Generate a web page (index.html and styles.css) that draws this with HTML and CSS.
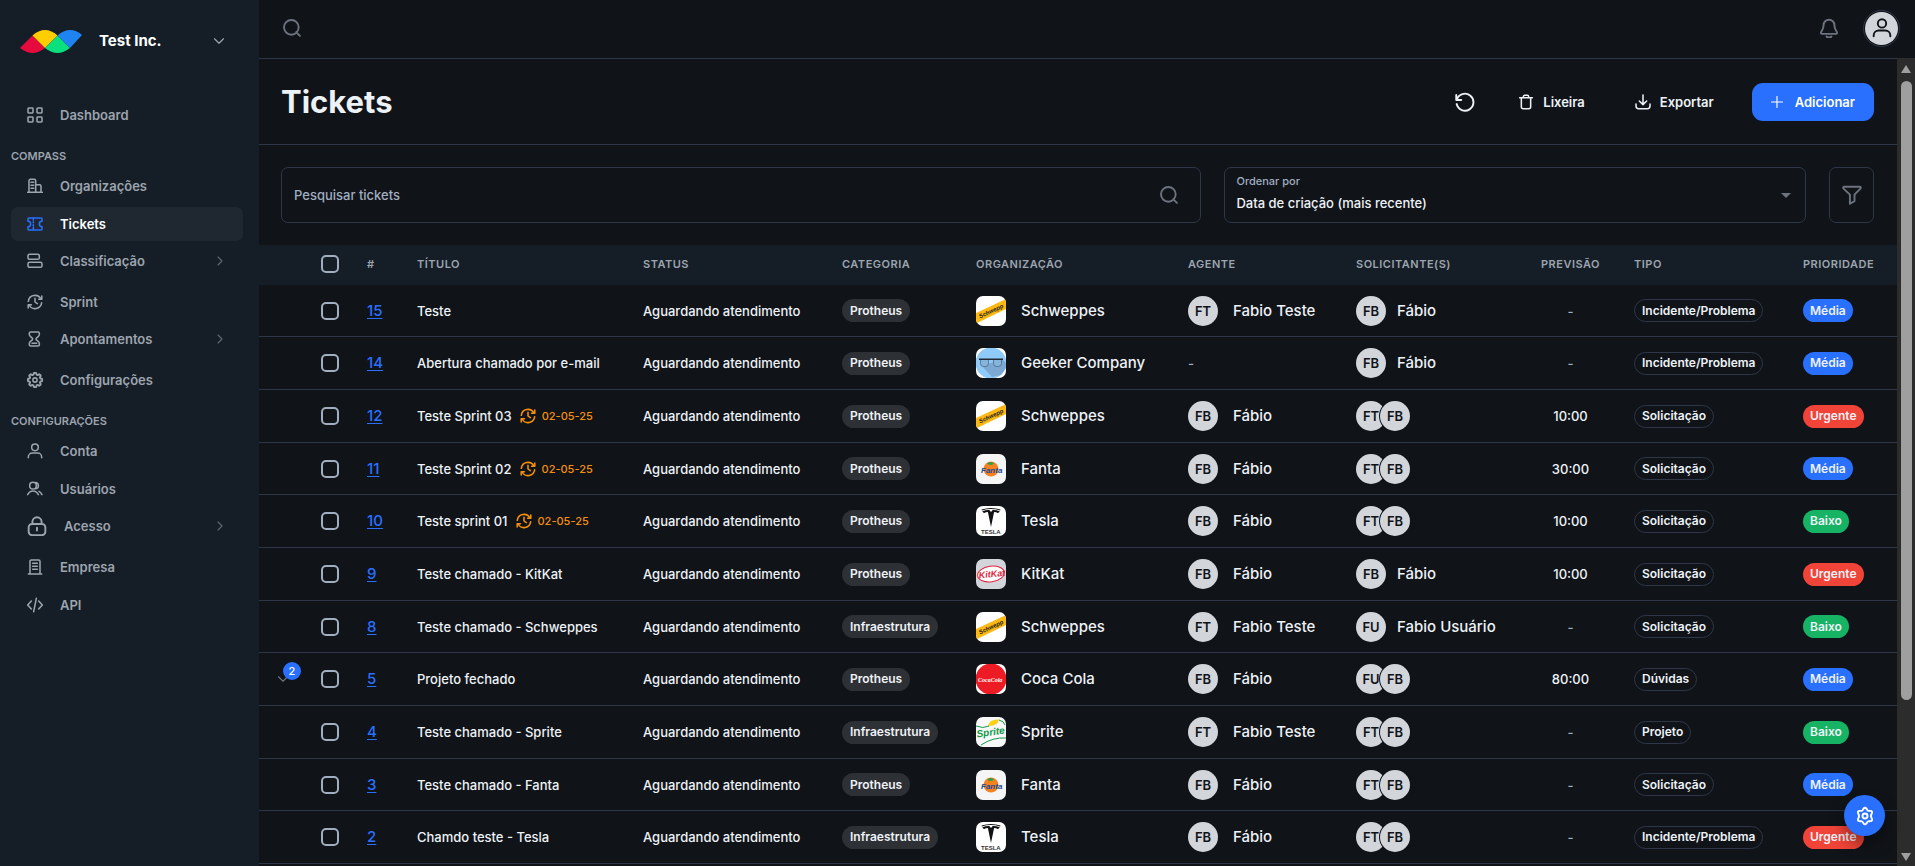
FILE: index.html
```html
<!DOCTYPE html>
<html lang="pt-BR">

<head>
	<meta charset="UTF-8">
	<meta name="viewport" content="width=device-width, initial-scale=1.0">
	<title>Tickets</title>
	<link rel="stylesheet" href="styles.css">
</head>

<body>
	<!-- icons and organization logos -->
	<svg class="sprite" aria-hidden="true">
		<symbol id="i-search" viewBox="0 0 24 24"><path d="M21.5 21.5l-4.5-4.5M20 11.2a8.8 8.8 0 1 1-17.6 0 8.8 8.8 0 0 1 17.6 0z" /></symbol>
		<symbol id="i-down" viewBox="0 0 24 24"><path d="M3 7.500l9 9 9-9" /></symbol>
		<symbol id="i-right" viewBox="0 0 24 24"><path d="M8 4l8 8-8 8" /></symbol>
		<symbol id="i-grid" viewBox="0 0 24 24"><rect x="1.5" y="1.5" width="7.5" height="7.5" rx="1" /><rect x="15" y="1.5" width="7.5" height="7.5" rx="1" /><rect x="1.5" y="15" width="7.5" height="7.5" rx="1" /><rect x="15" y="15" width="7.5" height="7.5" rx="1" /></symbol>
		<symbol id="i-building" viewBox="0 0 24 24"><path d="M1 21.5h22M3 21.5V4a2 2 0 0 1 2-2h6a2 2 0 0 1 2 2v17.500M13 10h6a2 2 0 0 1 2 2v9.500M6 6.500h4M6 11h4M6 15.500h4" /></symbol>
		<symbol id="i-ticket" viewBox="0 0 24 24"><path d="M9.500 4v2M9.500 8.500v1.500M9.500 13v1.500M9.500 17v3M3 3h18a1.500 1.500 0 0 1 1.500 1.500V8a4 4 0 0 0 0 8v3.500A1.500 1.500 0 0 1 21 21H3a1.500 1.500 0 0 1-1.500-1.500V16a4 4 0 0 0 0-8V4.500A1.500 1.500 0 0 1 3 3z" /></symbol>
		<symbol id="i-rows" viewBox="0 0 24 24"><rect x="1.5" y="2" width="17" height="7.5" rx="2.5" /><rect x="1.5" y="14" width="21" height="7.5" rx="2.5" /></symbol>
		<symbol id="i-sprint" viewBox="0 0 24 24"><path d="M20.8 7.500A10 10 0 0 0 2 11M3.200 16.500A10 10 0 0 0 22 13M22.200 3v4.800h-4.800M1.800 21v-4.800h4.800M12 6.500V12l3.500 2.500" /></symbol>
		<symbol id="i-hourglass" viewBox="0 0 24 24"><path d="M5.500 1.500h11a2 2 0 0 1 2 2v2.200c0 2.600-5 4-5 6.300s5 3.700 5 6.300v2.200a2 2 0 0 1-2 2h-11a2 2 0 0 1-2-2v-2.200c0-2.600 5-4 5-6.300s-5-3.700-5-6.300V3.500a2 2 0 0 1 2-2zM7.500 18.500h7" /></symbol>
		<symbol id="i-cog8" viewBox="0 0 24 24"><path transform="translate(-2.4 -2.4) scale(1.2)" d="M10.343 3.940c.09-.542.56-.940 1.110-.940h1.093c.55 0 1.020.398 1.110.940l.149.894c.07.424.384.764.780.930.398.164.855.142 1.205-.108l.737-.527a1.125 1.125 0 0 1 1.450.120l.773.774c.39.389.44 1.002.12 1.450l-.527.737c-.25.35-.272.806-.107 1.204.165.397.505.710.930.780l.893.150c.543.090.940.559.940 1.109v1.094c0 .55-.397 1.020-.940 1.110l-.894.149c-.424.070-.764.383-.929.780-.165.398-.143.854.107 1.204l.527.738c.32.447.269 1.060-.120 1.450l-.774.773a1.125 1.125 0 0 1-1.449.120l-.738-.527c-.35-.25-.806-.272-1.203-.107-.398.165-.710.505-.781.929l-.149.894c-.09.542-.56.940-1.110.940h-1.094c-.55 0-1.019-.398-1.110-.940l-.148-.894c-.071-.424-.384-.764-.781-.930-.398-.164-.854-.142-1.204.108l-.738.527c-.447.320-1.060.269-1.450-.120l-.773-.774a1.125 1.125 0 0 1-.120-1.450l.527-.737c.25-.35.272-.806.108-1.204-.165-.397-.506-.710-.930-.780l-.894-.150c-.542-.09-.940-.56-.940-1.109v-1.094c0-.55.398-1.020.940-1.110l.894-.149c.424-.07.765-.383.930-.780.165-.398.143-.854-.108-1.204l-.526-.738a1.125 1.125 0 0 1 .120-1.450l.773-.773a1.125 1.125 0 0 1 1.450-.120l.737.527c.35.25.807.272 1.204.107.397-.165.710-.505.780-.929l.150-.894z" /><circle cx="12" cy="12" r="3.2" /></symbol>
		<symbol id="i-cog6" viewBox="0 0 24 24"><path d="M10.200 3.200Q12 .8 13.800 3.200L14.600 4.600Q15.300 5.900 16.800 5.800L18.400 5.800Q21.300 6 20.200 8.800L19.500 10.500Q18.800 12 19.500 13.500L20.200 15.200Q21.300 18 18.400 18.200L16.800 18.200Q15.300 18.100 14.600 19.400L13.800 20.800Q12 23.200 10.200 20.800L9.400 19.400Q8.700 18.100 7.200 18.200L5.600 18.200Q2.700 18 3.800 15.200L4.500 13.500Q5.200 12 4.500 10.500L3.800 8.800Q2.700 6 5.600 5.800L7.200 5.800Q8.700 5.900 9.400 4.600z" /><circle cx="12" cy="12" r="3" /></symbol>
		<symbol id="i-user" viewBox="0 0 24 24"><path d="M2 22v-1a6 6 0 0 1 6-6h8a6 6 0 0 1 6 6v1M17 6.500a5 5 0 1 1-10 0 5 5 0 0 1 10 0z" /></symbol>
		<symbol id="i-users" viewBox="0 0 24 24"><path d="M1 20.500c2-3.700 4.500-5.500 8-5.500s6 1.800 8 5.500M14 7a5 5 0 1 1-10 0 5 5 0 0 1 10 0zM13.500 2.200a5 5 0 0 1 0 9.600M18 15.500c2 1 3.500 2.700 4.500 5" /></symbol>
		<symbol id="i-lock" viewBox="0 0 24 24"><path d="M6.500 9V7a5.500 5.500 0 0 1 11 0v2M12 14v3.500M6 9.500h12a4 4 0 0 1 4 4V19a4 4 0 0 1-4 4H6a4 4 0 0 1-4-4v-5.500a4 4 0 0 1 4-4z" /></symbol>
		<symbol id="i-office" viewBox="0 0 24 24"><path d="M2 22.500h20M4.500 22.500V3.500a2 2 0 0 1 2-2h11a2 2 0 0 1 2 2v19M8.500 6.500h7M8.500 11h7M8.500 15.500h7" /></symbol>
		<symbol id="i-code" viewBox="0 0 24 24"><path d="M6.500 6l-5.500 6 5.500 6M17.500 6l5.500 6-5.500 6M14 2l-4 20" /></symbol>
		<symbol id="i-bell" viewBox="0 0 24 24"><path d="M9 22.300c.8.700 1.900 1 3 1s2.200-.3 3-1M18.500 8.500a6.500 6.500 0 0 0-13 0c0 3.200-1 5.200-1.900 6.600-1 1.500-1.600 2.400-1.300 3.100.2.700 1 .8 2.200.8h15c1.200 0 2-.1 2.200-.8.3-.7-.3-1.600-1.300-3.100-.9-1.400-1.900-3.400-1.900-6.600z" /></symbol>
		<symbol id="i-reload" viewBox="0 0 24 24"><path d="M1.500 3.500v6h6M2.200 9.200A10.200 10.200 0 1 1 2 14.500" /></symbol>
		<symbol id="i-trash" viewBox="0 0 24 24"><path d="M2.500 5.500h19M8 5.500V4a2 2 0 0 1 2-2h4a2 2 0 0 1 2 2v1.500M5 5.500V19a3 3 0 0 0 3 3h8a3 3 0 0 0 3-3V5.500" /></symbol>
		<symbol id="i-download" viewBox="0 0 24 24"><path d="M1.500 15v3a4 4 0 0 0 4 4h13a4 4 0 0 0 4-4v-3M12 1.500v14M6.500 10.500l5.500 5.500 5.500-5.500" /></symbol>
		<symbol id="i-plus" viewBox="0 0 24 24"><path d="M12 1v22M1 12h22" /></symbol>
		<symbol id="i-filter" viewBox="0 0 24 24"><path d="M2.500 2h19c1 0 1.400 1.500.6 2.300L15 11.500v7.800L9.500 22.500v-11L1.900 4.300C1.100 3.500 1.500 2 2.500 2z" /></symbol>

		<symbol id="logo-schweppes" viewBox="0 0 30 30"><path fill="#fff" d="M0 0h30v30H0z" /><path fill="#fdb913" d="M0 17L30 3v10L0 27.500z" /><text x="4" y="22.500" transform="rotate(-25 4 22.500)" class="mark mark-schweppes">Schwepp</text></symbol>
		<symbol id="logo-geeker" viewBox="0 0 30 30"><path fill="#fff" d="M0 0h30v30H0z" /><circle cx="15" cy="15" r="15.5" fill="#90caf9" /><path fill="#7ba9d4" d="M6 18l10 11 9-2 5-7v-5l-4-4z" /><path fill="#85b4dd" stroke="#4b5d6c" stroke-width=".7" d="M4.500 11.500h8v4a3 3 0 0 1-3 3h-2a3 3 0 0 1-3-3zM17.500 11.500h8v4a3 3 0 0 1-3 3h-2a3 3 0 0 1-3-3z" /><path stroke="#222b33" stroke-width="1.5" d="M3 11.300h24" /></symbol>
		<symbol id="logo-fanta" viewBox="0 0 30 30"><path fill="#f5f5f6" d="M0 0h30v30H0z" /><circle cx="15" cy="15" r="7.5" fill="#f58220" /><path fill="#2e9e49" d="M11 9.500q4-3 7 0-3 3-7 0z" /><text x="5" y="19" class="mark mark-fanta">Fanta</text></symbol>
		<symbol id="logo-tesla" viewBox="0 0 30 30"><path fill="#fff" d="M0 0h30v30H0z" /><path fill="#111" d="M5.500 3.500Q15 .5 24.500 3.500l-.4.9Q15 1.800 5.900 4.400zM6.300 5.200q4-1.300 7-1.100L15 6l1.700-1.900q3-.2 7 1.100-.6 1.600-2 1.700-1.300-1-3.600-1L15 21 11.900 5.900q-2.300 0-3.600 1-1.400-.1-2-1.700z" /><text x="5" y="27.500" class="mark mark-tesla">TESLA</text></symbol>
		<symbol id="logo-kitkat" viewBox="0 0 30 30"><path fill="#d2d6db" d="M0 0h30v30H0z" /><ellipse cx="15" cy="15" rx="13.5" ry="7.8" transform="rotate(-8 15 15)" fill="#fff" stroke="#e0243b" stroke-width="1" /><text x="3" y="19.500" transform="rotate(-6 3 19.500)" class="mark mark-kitkat">KitKat</text></symbol>
		<symbol id="logo-coca" viewBox="0 0 30 30"><path fill="#fff" d="M0 0h30v30H0z" /><circle cx="15" cy="15" r="15.5" fill="#ed1c24" /><text x="2" y="17.500" class="mark mark-coca">CocaCola</text></symbol>
		<symbol id="logo-sprite" viewBox="0 0 30 30"><path fill="#f7f8f7" d="M0 0h30v30H0z" /><path fill="#fcd116" d="M12 9q1-7 11-6.500-1 7-11 6.500z" /><path stroke="#12994a" stroke-width="1" fill="none" d="M0 9q7 3 13 0M23 3q5 1 6 5M5 28q12-8 25-7" /><text x="1" y="20.500" transform="rotate(-8 1 20.500)" class="mark mark-sprite">Sprite</text></symbol>
	</svg>

	<aside class="sidebar">
		<button class="tenant" type="button">
			<svg class="tenant-logo" viewBox="0 0 62 23" aria-hidden="true">
				<path fill="#e50b3f" d="M0 18L12.500 5.500 25 18Q18.500 23 12.500 23T0 18z" />
				<path fill="#fecd02" d="M12.500 5.500Q18.500 0 25 0t12.500 5.500L25 18z" />
				<path fill="#0be07e" d="M25 18L37.500 5.500 50 18Q43.500 23 37.500 23T25 18z" />
				<path fill="#2083f2" d="M37.500 5.500Q43.500 0 50 0t12 5L50 18z" />
			</svg>
			<span class="tenant-name">Test Inc.</span>
			<svg class="icon icon-xs"><use href="#i-down" /></svg>
		</button>

		<nav class="nav">
			<a class="nav-item" href="#"><svg class="icon"><use href="#i-grid" /></svg>Dashboard</a>

			<h2 class="nav-title">Compass</h2>
			<a class="nav-item" href="#"><svg class="icon"><use href="#i-building" /></svg>Organizações</a>
			<a class="nav-item active" href="#" aria-current="page"><svg class="icon"><use href="#i-ticket" /></svg>Tickets</a>
			<button class="nav-item nav-group" type="button"><svg class="icon"><use href="#i-rows" /></svg>Classificação<svg class="icon icon-xs nav-arrow"><use href="#i-right" /></svg></button>
			<a class="nav-item" href="#"><svg class="icon"><use href="#i-sprint" /></svg>Sprint</a>
			<button class="nav-item nav-group" type="button"><svg class="icon"><use href="#i-hourglass" /></svg>Apontamentos<svg class="icon icon-xs nav-arrow"><use href="#i-right" /></svg></button>
			<a class="nav-item" href="#"><svg class="icon"><use href="#i-cog8" /></svg>Configurações</a>

			<h2 class="nav-title">Configurações</h2>
			<a class="nav-item" href="#"><svg class="icon"><use href="#i-user" /></svg>Conta</a>
			<a class="nav-item" href="#"><svg class="icon"><use href="#i-users" /></svg>Usuários</a>
			<button class="nav-item nav-group" type="button"><svg class="icon icon-md"><use href="#i-lock" /></svg>Acesso<svg class="icon icon-xs nav-arrow"><use href="#i-right" /></svg></button>
			<a class="nav-item" href="#"><svg class="icon"><use href="#i-office" /></svg>Empresa</a>
			<a class="nav-item" href="#"><svg class="icon"><use href="#i-code" /></svg>API</a>
		</nav>
	</aside>

	<div class="main">
		<header class="topbar">
			<button class="icon-button" type="button" aria-label="Pesquisar"><svg class="icon icon-md"><use href="#i-search" /></svg></button>
			<div class="topbar-right">
				<button class="icon-button" type="button" aria-label="Notificações"><svg class="icon icon-md"><use href="#i-bell" /></svg></button>
				<button class="account" type="button" aria-label="Conta"><span class="account-photo"><svg class="icon icon-md"><use href="#i-user" /></svg></span></button>
			</div>
		</header>

		<div class="viewport">
			<main class="page">
				<div class="page-header">
					<h1 class="page-title">Tickets</h1>
					<div class="actions">
						<button class="action action-reload" type="button" aria-label="Atualizar"><svg class="icon icon-md"><use href="#i-reload" /></svg></button>
						<button class="action" type="button"><svg class="icon"><use href="#i-trash" /></svg>Lixeira</button>
						<button class="action" type="button"><svg class="icon"><use href="#i-download" /></svg>Exportar</button>
						<button class="action action-primary" type="button"><svg class="icon icon-xs"><use href="#i-plus" /></svg>Adicionar</button>
					</div>
				</div>

				<div class="toolbar">
					<div class="field search-field">
						<input type="text" placeholder="Pesquisar tickets" aria-label="Pesquisar tickets">
						<svg class="icon icon-md"><use href="#i-search" /></svg>
					</div>
					<div class="field sort-field">
						<label for="sort">Ordenar por</label>
						<select id="sort">
							<option>Data de criação (mais recente)</option>
							<option>Data de criação (mais antigo)</option>
						</select>
					</div>
					<button class="field filter-button" type="button" aria-label="Filtros"><svg class="icon icon-md"><use href="#i-filter" /></svg></button>
				</div>

				<table class="tickets">
					<colgroup>
						<col class="col-expand"><col class="col-check"><col class="col-id"><col class="col-title"><col class="col-status"><col class="col-category">
						<col class="col-org"><col class="col-agent"><col class="col-requester"><col class="col-forecast"><col class="col-type"><col class="col-priority">
					</colgroup>
					<thead>
						<tr>
							<th></th>
							<th><input type="checkbox" aria-label="Selecionar todos"></th>
							<th>#</th>
							<th>Título</th>
							<th>Status</th>
							<th>Categoria</th>
							<th>Organização</th>
							<th>Agente</th>
							<th>Solicitante(s)</th>
							<th class="forecast">Previsão</th>
							<th>Tipo</th>
							<th>Prioridade</th>
						</tr>
					</thead>
					<tbody>
						<tr>
							<td></td>
							<td><input type="checkbox" aria-label="Ticket 15"></td>
							<td><a href="#">15</a></td>
							<td>Teste</td>
							<td>Aguardando atendimento</td>
							<td><span class="chip">Protheus</span></td>
							<td><div class="person"><svg class="org-logo"><use href="#logo-schweppes" /></svg>Schweppes</div></td>
							<td><div class="person"><span class="avatar">FT</span>Fabio Teste</div></td>
							<td><div class="person requester"><span class="avatar">FB</span>Fábio</div></td>
							<td class="forecast empty">-</td>
							<td><span class="chip chip-outline">Incidente/Problema</span></td>
							<td><span class="chip chip-medium">Média</span></td>
						</tr>
						<tr>
							<td></td>
							<td><input type="checkbox" aria-label="Ticket 14"></td>
							<td><a href="#">14</a></td>
							<td>Abertura chamado por e-mail</td>
							<td>Aguardando atendimento</td>
							<td><span class="chip">Protheus</span></td>
							<td><div class="person"><svg class="org-logo"><use href="#logo-geeker" /></svg>Geeker Company</div></td>
							<td class="empty">-</td>
							<td><div class="person requester"><span class="avatar">FB</span>Fábio</div></td>
							<td class="forecast empty">-</td>
							<td><span class="chip chip-outline">Incidente/Problema</span></td>
							<td><span class="chip chip-medium">Média</span></td>
						</tr>
						<tr>
							<td></td>
							<td><input type="checkbox" aria-label="Ticket 12"></td>
							<td><a href="#">12</a></td>
							<td><div class="title">Teste Sprint 03<span class="sprint"><svg class="icon"><use href="#i-sprint" /></svg>02-05-25</span></div></td>
							<td>Aguardando atendimento</td>
							<td><span class="chip">Protheus</span></td>
							<td><div class="person"><svg class="org-logo"><use href="#logo-schweppes" /></svg>Schweppes</div></td>
							<td><div class="person"><span class="avatar">FB</span>Fábio</div></td>
							<td><div class="stack"><span class="avatar">FT</span><span class="avatar">FB</span></div></td>
							<td class="forecast">10:00</td>
							<td><span class="chip chip-outline">Solicitação</span></td>
							<td><span class="chip chip-urgent">Urgente</span></td>
						</tr>
						<tr>
							<td></td>
							<td><input type="checkbox" aria-label="Ticket 11"></td>
							<td><a href="#">11</a></td>
							<td><div class="title">Teste Sprint 02<span class="sprint"><svg class="icon"><use href="#i-sprint" /></svg>02-05-25</span></div></td>
							<td>Aguardando atendimento</td>
							<td><span class="chip">Protheus</span></td>
							<td><div class="person"><svg class="org-logo"><use href="#logo-fanta" /></svg>Fanta</div></td>
							<td><div class="person"><span class="avatar">FB</span>Fábio</div></td>
							<td><div class="stack"><span class="avatar">FT</span><span class="avatar">FB</span></div></td>
							<td class="forecast">30:00</td>
							<td><span class="chip chip-outline">Solicitação</span></td>
							<td><span class="chip chip-medium">Média</span></td>
						</tr>
						<tr>
							<td></td>
							<td><input type="checkbox" aria-label="Ticket 10"></td>
							<td><a href="#">10</a></td>
							<td><div class="title">Teste sprint 01<span class="sprint"><svg class="icon"><use href="#i-sprint" /></svg>02-05-25</span></div></td>
							<td>Aguardando atendimento</td>
							<td><span class="chip">Protheus</span></td>
							<td><div class="person"><svg class="org-logo"><use href="#logo-tesla" /></svg>Tesla</div></td>
							<td><div class="person"><span class="avatar">FB</span>Fábio</div></td>
							<td><div class="stack"><span class="avatar">FT</span><span class="avatar">FB</span></div></td>
							<td class="forecast">10:00</td>
							<td><span class="chip chip-outline">Solicitação</span></td>
							<td><span class="chip chip-low">Baixo</span></td>
						</tr>
						<tr>
							<td></td>
							<td><input type="checkbox" aria-label="Ticket 9"></td>
							<td><a href="#">9</a></td>
							<td>Teste chamado - KitKat</td>
							<td>Aguardando atendimento</td>
							<td><span class="chip">Protheus</span></td>
							<td><div class="person"><svg class="org-logo"><use href="#logo-kitkat" /></svg>KitKat</div></td>
							<td><div class="person"><span class="avatar">FB</span>Fábio</div></td>
							<td><div class="person requester"><span class="avatar">FB</span>Fábio</div></td>
							<td class="forecast">10:00</td>
							<td><span class="chip chip-outline">Solicitação</span></td>
							<td><span class="chip chip-urgent">Urgente</span></td>
						</tr>
						<tr>
							<td></td>
							<td><input type="checkbox" aria-label="Ticket 8"></td>
							<td><a href="#">8</a></td>
							<td>Teste chamado - Schweppes</td>
							<td>Aguardando atendimento</td>
							<td><span class="chip">Infraestrutura</span></td>
							<td><div class="person"><svg class="org-logo"><use href="#logo-schweppes" /></svg>Schweppes</div></td>
							<td><div class="person"><span class="avatar">FT</span>Fabio Teste</div></td>
							<td><div class="person requester"><span class="avatar">FU</span>Fabio Usuário</div></td>
							<td class="forecast empty">-</td>
							<td><span class="chip chip-outline">Solicitação</span></td>
							<td><span class="chip chip-low">Baixo</span></td>
						</tr>
						<tr>
							<td><button class="expand" type="button" aria-label="Expandir"><svg class="icon icon-xs"><use href="#i-down" /></svg><span class="badge">2</span></button></td>
							<td><input type="checkbox" aria-label="Ticket 5"></td>
							<td><a href="#">5</a></td>
							<td>Projeto fechado</td>
							<td>Aguardando atendimento</td>
							<td><span class="chip">Protheus</span></td>
							<td><div class="person"><svg class="org-logo"><use href="#logo-coca" /></svg>Coca Cola</div></td>
							<td><div class="person"><span class="avatar">FB</span>Fábio</div></td>
							<td><div class="stack"><span class="avatar">FU</span><span class="avatar">FB</span></div></td>
							<td class="forecast">80:00</td>
							<td><span class="chip chip-outline">Dúvidas</span></td>
							<td><span class="chip chip-medium">Média</span></td>
						</tr>
						<tr>
							<td></td>
							<td><input type="checkbox" aria-label="Ticket 4"></td>
							<td><a href="#">4</a></td>
							<td>Teste chamado - Sprite</td>
							<td>Aguardando atendimento</td>
							<td><span class="chip">Infraestrutura</span></td>
							<td><div class="person"><svg class="org-logo"><use href="#logo-sprite" /></svg>Sprite</div></td>
							<td><div class="person"><span class="avatar">FT</span>Fabio Teste</div></td>
							<td><div class="stack"><span class="avatar">FT</span><span class="avatar">FB</span></div></td>
							<td class="forecast empty">-</td>
							<td><span class="chip chip-outline">Projeto</span></td>
							<td><span class="chip chip-low">Baixo</span></td>
						</tr>
						<tr>
							<td></td>
							<td><input type="checkbox" aria-label="Ticket 3"></td>
							<td><a href="#">3</a></td>
							<td>Teste chamado - Fanta</td>
							<td>Aguardando atendimento</td>
							<td><span class="chip">Protheus</span></td>
							<td><div class="person"><svg class="org-logo"><use href="#logo-fanta" /></svg>Fanta</div></td>
							<td><div class="person"><span class="avatar">FB</span>Fábio</div></td>
							<td><div class="stack"><span class="avatar">FT</span><span class="avatar">FB</span></div></td>
							<td class="forecast empty">-</td>
							<td><span class="chip chip-outline">Solicitação</span></td>
							<td><span class="chip chip-medium">Média</span></td>
						</tr>
						<tr>
							<td></td>
							<td><input type="checkbox" aria-label="Ticket 2"></td>
							<td><a href="#">2</a></td>
							<td>Chamdo teste - Tesla</td>
							<td>Aguardando atendimento</td>
							<td><span class="chip">Infraestrutura</span></td>
							<td><div class="person"><svg class="org-logo"><use href="#logo-tesla" /></svg>Tesla</div></td>
							<td><div class="person"><span class="avatar">FB</span>Fábio</div></td>
							<td><div class="stack"><span class="avatar">FT</span><span class="avatar">FB</span></div></td>
							<td class="forecast empty">-</td>
							<td><span class="chip chip-outline">Incidente/Problema</span></td>
							<td><span class="chip chip-urgent">Urgente</span></td>
						</tr>
					</tbody>
				</table>
			</main>

			<div class="scrollbar" aria-hidden="true">
				<svg class="scroll-arrow" viewBox="0 0 12 10"><path d="M6 1l5 8H1z" /></svg>
				<div class="scroll-track"><div class="scroll-thumb"></div></div>
				<svg class="scroll-arrow" viewBox="0 0 12 10"><path d="M6 9l5-8H1z" /></svg>
			</div>
		</div>
	</div>

	<button class="fab" type="button" aria-label="Preferências"><svg class="icon icon-md"><use href="#i-cog6" /></svg></button>
</body>

</html>
```
FILE: styles.css
```css
* {
	box-sizing: border-box;
}

body {
	margin: 0;
	display: flex;
	height: 100vh;
	overflow: hidden;
	font-family: Inter, "Liberation Sans", sans-serif;
	font-size: 13px;
	font-weight: 500;
	line-height: 20px;
	color: #edf2f7;
	background-color: #101318;
}

button {
	margin: 0;
	padding: 0;
	border: 0;
	background: none;
	font: inherit;
	color: inherit;
	cursor: pointer;
}

.sprite {
	display: none;
}

.icon {
	flex: none;
	width: 16px;
	height: 16px;
	fill: none;
	stroke: currentColor;
	stroke-width: 2.3;
	stroke-linecap: round;
	stroke-linejoin: round;
}

.icon-xs {
	width: 12px;
	height: 12px;
}

.icon-md {
	width: 20px;
	height: 20px;
}

/* sidebar */

.sidebar {
	flex: none;
	width: 259px;
	padding: 16px 16px 0 11px;
	background-color: #151e27;
}

.tenant {
	display: flex;
	align-items: center;
	width: 100%;
	height: 50px;
	padding: 0 18px 0 9px;
	color: #9da4ae;
}

.tenant-logo {
	width: 62px;
	height: 23px;
}

.tenant-name {
	flex: 1;
	margin-left: 17px;
	text-align: left;
	font-size: 15px;
	font-weight: 700;
	color: #fff;
}

.nav {
	display: flex;
	flex-direction: column;
	gap: 4px;
	margin-top: 32px;
}

.nav-title {
	margin: 11px 0 0;
	font-size: 11px;
	font-weight: 600;
	line-height: 18px;
	text-transform: uppercase;
	color: #9da4ae;
}

.nav-item {
	display: flex;
	align-items: center;
	gap: 17px;
	height: 34px;
	padding: 0 17px 0 16px;
	border-radius: 7px;
	font-size: 13px;
	font-weight: 600;
	color: #9da4ae;
	text-decoration: none;
}

.nav-item.active {
	color: #fff;
	background-color: #1f2830;
}

.nav-item.active .icon {
	color: #2970ff;
}

.nav-group {
	height: 32px;
	margin-bottom: 4px;
}

.nav-item .nav-arrow {
	margin-left: auto;
	color: #5d6570;
}

/* top bar */

.main {
	flex: 1;
	display: flex;
	flex-direction: column;
	min-width: 0;
}

.topbar {
	flex: none;
	display: flex;
	justify-content: space-between;
	align-items: center;
	height: 58px;
	padding: 0 15px 2px 23px;
}

.topbar-right {
	display: flex;
	align-items: center;
	gap: 24px;
}

.icon-button {
	display: flex;
	color: #6c737f;
}

.account {
	padding: 1px;
	border: 1px solid #2d3748;
	border-radius: 50%;
}

.account-photo {
	display: flex;
	align-items: center;
	justify-content: center;
	width: 33px;
	height: 33px;
	border-radius: 50%;
	background-color: #d2d6db;
	color: #101318;
}

.viewport {
	flex: 1;
	display: flex;
	min-height: 0;
}

.page {
	flex: 1;
	min-width: 0;
	overflow: hidden;
	border-top: 1px solid #2d3748;
}

/* page header */

.page-header {
	display: flex;
	justify-content: space-between;
	align-items: center;
	height: 86px;
	padding: 0 23px 0 22px;
	border-bottom: 1px solid #2d3748;
}

.page-title {
	margin: 0;
	font-size: 31px;
	font-weight: 700;
	line-height: 40px;
}

.actions {
	display: flex;
	align-items: center;
	gap: 14px;
}

.action {
	display: flex;
	align-items: center;
	gap: 9px;
	height: 38px;
	padding: 0 18px;
	border-radius: 11px;
	font-size: 13px;
	font-weight: 600;
}

.action-reload {
	padding-right: 11px;
}

.action-primary {
	gap: 12px;
	margin-left: 6px;
	padding: 0 19px;
	background-color: #2970ff;
	color: #fff;
}

/* toolbar */

.toolbar {
	display: flex;
	gap: 23px;
	padding: 22px 23px 22px 22px;
}

.field {
	height: 56px;
	border: 1px solid #2d3748;
	border-radius: 7px;
}

.field input,
.field select {
	margin: 0;
	padding: 0;
	border: 0;
	outline: 0;
	appearance: none;
	background: none;
	font: inherit;
	color: inherit;
}

.search-field {
	flex: 27 1 0;
	display: flex;
	align-items: center;
	padding: 0 21px 0 12px;
	color: #6c737f;
}

.search-field input {
	flex: 1;
	height: 100%;
	color: #edf2f7;
}

.search-field input::placeholder {
	color: #a0aec0;
	opacity: 1;
}

.sort-field {
	position: relative;
	flex: 17 1 0;
	display: flex;
	flex-direction: column;
	padding: 4px 11px 0;
}

.sort-field label {
	font-size: 11px;
	font-weight: 500;
	line-height: 18px;
	color: #a0aec0;
}

.sort-field select {
	height: 26px;
}

.sort-field::after {
	content: "";
	position: absolute;
	right: 14px;
	top: 25px;
	border: 5px solid transparent;
	border-top-color: #6c737f;
	border-bottom: 0;
}

.filter-button {
	display: flex;
	align-items: center;
	justify-content: center;
	width: 45px;
	color: #6c737f;
}

/* tickets table */

.tickets {
	width: 100%;
	table-layout: fixed;
	border-collapse: separate;
	border-spacing: 0;
}

.col-expand {
	width: 62px;
}

.col-check {
	width: 46px;
}

.col-id {
	width: 50px;
}

.col-title {
	width: 226px;
}

.col-status {
	width: 199px;
}

.col-category {
	width: 134px;
}

.col-org {
	width: 212px;
}

.col-agent {
	width: 168px;
}

.col-requester {
	width: 151px;
}

.col-forecast {
	width: 127px;
}

.col-type {
	width: 169px;
}

.col-priority {
	width: 94px;
}

.tickets th {
	height: 40px;
	padding: 0 0 2px;
	text-align: left;
	font-size: 11px;
	font-weight: 600;
	letter-spacing: 0.5px;
	text-transform: uppercase;
	white-space: nowrap;
	color: #9da4ae;
	background-color: #151e27;
}

.tickets td {
	height: 53px;
	padding: 0;
	border-bottom: 1px solid #2d3748;
	white-space: nowrap;
}

.tickets tr:nth-child(3n + 1) td {
	height: 52px;
}

.tickets .forecast {
	text-align: center;
}

.tickets .empty {
	color: #a0aec0;
}

.tickets a {
	font-size: 15px;
	color: #2970ff;
	text-underline-offset: 2px;
}

.tickets input {
	display: block;
	width: 18px;
	height: 18px;
	margin: 0;
	border: 2px solid #a0aec0;
	border-radius: 5px;
	appearance: none;
}

.tickets input:checked {
	background-color: #2970ff;
	border-color: #2970ff;
}

.title {
	display: flex;
	align-items: center;
	gap: 8px;
}

.sprint {
	display: flex;
	align-items: center;
	gap: 6px;
	font-size: 11px;
	color: #f79009;
}

.chip {
	display: inline-flex;
	align-items: center;
	height: 23px;
	padding: 0 8px;
	border-radius: 12px;
	font-size: 12px;
	font-weight: 600;
	background-color: #2d3034;
}

.chip-outline {
	padding: 0 7px;
	border: 1px solid #2d3748;
	background: none;
}

.chip-medium,
.chip-urgent,
.chip-low {
	padding: 0 7px;
}

.chip-medium {
	background-color: #2970ff;
}

.chip-urgent {
	background-color: #f04438;
}

.chip-low {
	background-color: #16b364;
}

.person {
	display: flex;
	align-items: center;
	gap: 15px;
	font-size: 15px;
}

.requester {
	gap: 11px;
}

.org-logo {
	width: 30px;
	height: 30px;
	border-radius: 7px;
}

.avatar {
	flex: none;
	display: flex;
	align-items: center;
	justify-content: center;
	width: 30px;
	height: 30px;
	border-radius: 50%;
	font-size: 13px;
	font-weight: 600;
	color: #101318;
	background-color: #d2d6db;
}

.stack {
	display: flex;
}

.stack .avatar + .avatar {
	margin-left: -6px;
	box-shadow: 0 0 0 1px #101318;
}

.expand {
	position: relative;
	display: flex;
	margin-left: 18px;
	color: #6c737f;
}

.badge {
	position: absolute;
	left: 6px;
	bottom: 5px;
	width: 18px;
	height: 18px;
	border-radius: 50%;
	font-size: 11px;
	line-height: 18px;
	text-align: center;
	color: #fff;
	background-color: #2970ff;
}

/* lettering inside the organization logos */

.mark {
	font-family: "Liberation Sans", sans-serif;
	font-size: 6px;
	font-weight: 700;
	font-style: italic;
}

.mark-schweppes {
	fill: #1a1a1a;
}

.mark-fanta {
	font-size: 8px;
	fill: #174a97;
}

.mark-tesla {
	font-style: normal;
	fill: #333;
}

.mark-kitkat {
	font-size: 9px;
	fill: #e0243b;
}

.mark-coca {
	font-family: "Liberation Serif", serif;
	fill: #fff;
}

.mark-sprite {
	font-size: 10px;
	fill: #12994a;
}

/* scrollbar */

.scrollbar {
	flex: none;
	display: flex;
	flex-direction: column;
	align-items: center;
	width: 18px;
	padding: 6px 0 4px;
	background-color: #2c2c2c;
}

.scroll-arrow {
	width: 12px;
	height: 10px;
	fill: #9f9f9f;
}

.scroll-track {
	flex: 1;
	width: 11px;
	margin: 7px 0;
}

.scroll-thumb {
	height: 81%;
	border-radius: 6px;
	background-color: #9f9f9f;
}

.fab {
	position: fixed;
	right: 30px;
	bottom: 30px;
	display: flex;
	align-items: center;
	justify-content: center;
	width: 41px;
	height: 41px;
	border-radius: 50%;
	color: #fff;
	background-color: #2970ff;
	box-shadow: 0 8px 16px rgba(0, 0, 0, 0.4);
}
```
